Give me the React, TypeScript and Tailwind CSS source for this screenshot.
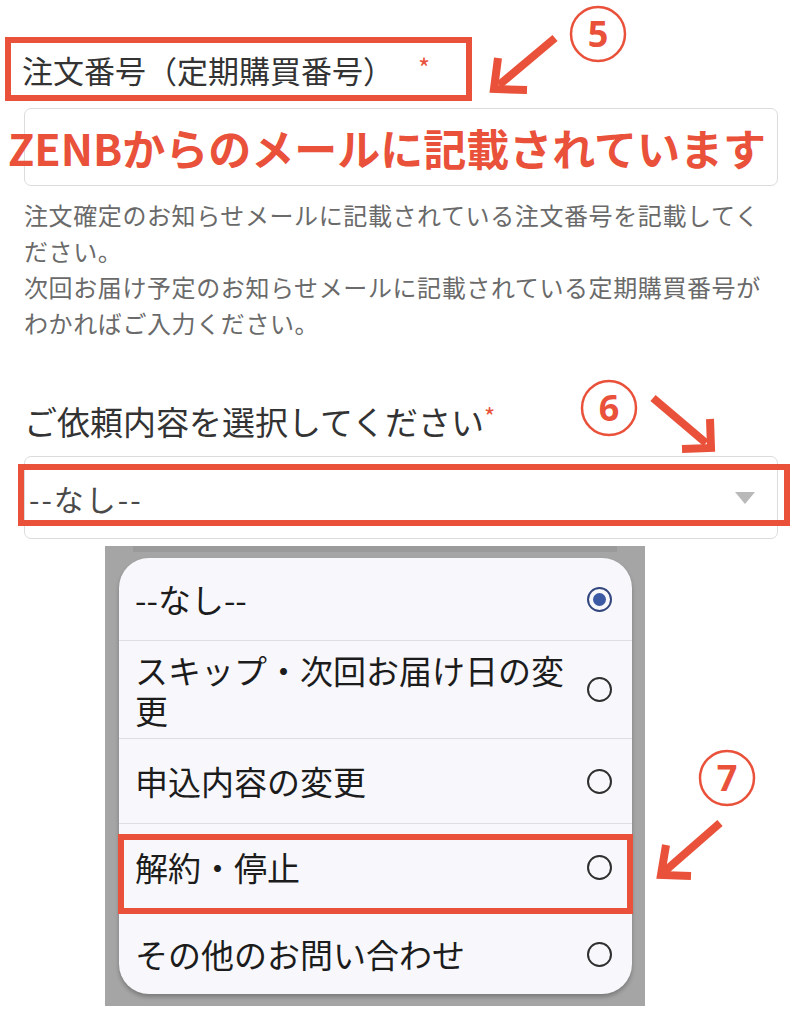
import React from "react";

function Radio({ checked }: { checked?: boolean }) {
  return checked ? (
    <div className="w-[25px] h-[25px] rounded-full border-[2.5px] border-[#34467e] flex items-center justify-center shrink-0">
      <div className="w-[13px] h-[13px] rounded-full bg-[#3b5aa3]" />
    </div>
  ) : (
    <div className="w-[25px] h-[25px] rounded-full border-[2.5px] border-[#2f2f2f] shrink-0" />
  );
}

function Annotations() {
  const red = "#e9513a";
  return (
    <svg className="absolute left-0 top-0 pointer-events-none" width="791" height="1024" viewBox="0 0 791 1024">
      {/* 5 */}
      <circle cx="598" cy="34" r="27" fill="none" stroke={red} strokeWidth="2.5" />
      <text x="598" y="47" textAnchor="middle" fontSize="36" fontWeight="700" fill={red} fontFamily="'Noto Sans', sans-serif">5</text>
      <line x1="555" y1="38" x2="499" y2="85" stroke={red} strokeWidth="8" strokeLinecap="butt" />
      <polyline points="498,58 494,89 527,90" fill="none" stroke={red} strokeWidth="8" strokeLinejoin="miter" />
      {/* 6 */}
      <circle cx="609" cy="408" r="27" fill="none" stroke={red} strokeWidth="2.5" />
      <text x="609" y="421" textAnchor="middle" fontSize="36" fontWeight="700" fill={red} fontFamily="'Noto Sans', sans-serif">6</text>
      <line x1="653" y1="398" x2="706" y2="443" stroke={red} strokeWidth="8" />
      <polyline points="710,419 711,448 682,449" fill="none" stroke={red} strokeWidth="8" strokeLinejoin="miter" />
      {/* 7 */}
      <circle cx="727" cy="778" r="27" fill="none" stroke={red} strokeWidth="2.5" />
      <text x="727" y="791" textAnchor="middle" fontSize="36" fontWeight="700" fill={red} fontFamily="'Noto Sans', sans-serif">7</text>
      <line x1="720" y1="823" x2="665" y2="871" stroke={red} strokeWidth="8" />
      <polyline points="666,845 661,875 691,876" fill="none" stroke={red} strokeWidth="8" strokeLinejoin="miter" />
    </svg>
  );
}

export default function App() {
  return (
    <div className="relative w-[791px] h-[1024px] overflow-hidden bg-white [font-family:'Noto_Sans_CJK_JP','Noto_Sans',sans-serif]">
      {/* label 1 */}
      <div className="mt-[37px] ml-[5px] w-[467px] h-[64px] border-[6px] border-[#e9513a] flex items-center pl-[11px]">
        <span className="text-[31px] text-[#333] leading-none">注文番号（定期購買番号）</span>
        <span className="ml-[24px] text-[26px] text-[#e9513a] leading-none -mt-[4px]">*</span>
      </div>

      {/* input */}
      <div className="mt-[7px] ml-[24px] w-[754px] h-[78px] border border-[#dcdcdc] rounded-[7px] flex items-center">
        <span className="-ml-[17px] text-[43px] font-bold text-[#e9513a] leading-none whitespace-nowrap">
          ZENBからのメールに記載されています
        </span>
      </div>

      {/* help */}
      <div className="mt-[11px] ml-[24px] text-[24px] leading-[36px] text-[#6a6a6a] whitespace-nowrap tracking-[0.6px]">
        <div>注文確定のお知らせメールに記載されている注文番号を記載してく</div>
        <div>ださい。</div>
        <div>次回お届け予定のお知らせメールに記載されている定期購買番号が</div>
        <div>わかればご入力ください。</div>
      </div>

      {/* label 2 */}
      <div className="mt-[60px] ml-[24px] flex items-start">
        <span className="text-[33px] leading-[40px] text-[#333]">ご依頼内容を選択してください</span>
        <span className="text-[24px] leading-[30px] text-[#e9513a]">*</span>
      </div>

      {/* select */}
      <div className="relative mt-[15px] ml-[24px] w-[754px] h-[83px] border border-[#dcdcdc] rounded-[7px] flex items-center justify-between pl-[4px] pr-[22px]">
        <span className="text-[30px] text-[#4a4a4a] leading-none tracking-[2px]">--なし--</span>
        <div className="w-0 h-0 border-l-[10px] border-r-[10px] border-t-[12px] border-l-transparent border-r-transparent border-t-[#b9b9b9]" />
        <div className="absolute left-[-7px] right-[-13px] top-[7px] bottom-[12px] border-[6px] border-[#e9513a]" />
      </div>

      {/* picker overlay screenshot */}
      <div className="relative mt-[7px] ml-[105px] w-[540px] h-[460px] bg-[#a5a5a5] pt-[12px] pl-[14px] pr-[13px]">
        <div className="absolute left-[28px] right-[28px] top-0 h-[6px] bg-[#9a9a9a]" />
        <div className="relative w-[513px] h-[436px] rounded-[30px] bg-[#f8f8fc] shadow-[0_3px_4px_rgba(0,0,0,0.25)] flex flex-col text-[#1c1c1c]">
          <div className="h-[83px] flex items-center justify-between pl-[16px] pr-[20px] border-b border-[#dedee4]">
            <span className="text-[33px] leading-none">--なし--</span>
            <Radio checked />
          </div>
          <div className="h-[98px] flex items-center justify-between pl-[16px] pr-[20px] border-b border-[#dedee4]">
            <span className="text-[33px] leading-[40px] w-[440px]">スキップ・次回お届け日の変更</span>
            <Radio />
          </div>
          <div className="h-[85px] flex items-center justify-between pl-[16px] pr-[20px] border-b border-[#dedee4]">
            <span className="text-[33px] leading-none">申込内容の変更</span>
            <Radio />
          </div>
          <div className="relative h-[85px] flex items-center justify-between pl-[16px] pr-[20px] pt-[2px]">
            <span className="text-[33px] leading-none">解約・停止</span>
            <Radio />
            <div className="absolute left-[-1px] right-[-1px] top-[10px] h-[80px] border-[6px] border-[#e9513a]" />
          </div>
          <div className="h-[85px] flex items-center justify-between pl-[16px] pr-[20px] pt-[6px]">
            <span className="text-[33px] leading-none">その他のお問い合わせ</span>
            <Radio />
          </div>
        </div>
      </div>

      <Annotations />
    </div>
  );
}
